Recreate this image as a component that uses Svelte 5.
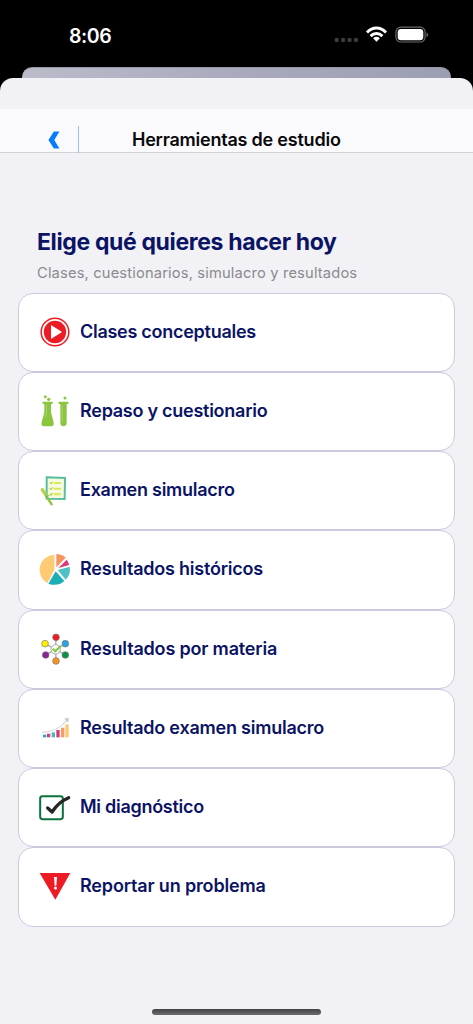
<script>
  const options = [
    { icon: 'play', label: 'Clases conceptuales', view: '0 -6 132 132', spacing: -0.27 },
    { icon: 'tubes', label: 'Repaso y cuestionario', view: '0 -2 132 132', spacing: -0.26 },
    { icon: 'exam', label: 'Examen simulacro', view: '0 2 132 132', spacing: -0.26 },
    { icon: 'pie', label: 'Resultados históricos', view: '0 0 132 132', spacing: -0.22 },
    { icon: 'network', label: 'Resultados por materia', view: '0 0 132 132', spacing: -0.18 },
    { icon: 'bars', label: 'Resultado examen simulacro', view: '0 1 132 132', spacing: -0.22 },
    { icon: 'check', label: 'Mi diagnóstico', view: '0 2 132 132', spacing: -0.28 },
    { icon: 'alert', label: 'Reportar un problema', view: '0 240 132 132', spacing: -0.16 }
  ];

  const nodes = [
    { x: 66, y: 31, color: '#ed1c24' },
    { x: 94, y: 50, color: '#29a5df' },
    { x: 94, y: 84, color: '#0a9347' },
    { x: 66, y: 102, color: '#f7941e' },
    { x: 35, y: 84, color: '#8b2394' },
    { x: 33, y: 50, color: '#fff200' }
  ];

  const bars = [
    { x: 27, y: 87, color: '#1fb0b3' },
    { x: 39, y: 84, color: '#dc3f77' },
    { x: 53, y: 80, color: '#45bdc0' },
    { x: 67, y: 73, color: '#d93a75' },
    { x: 81, y: 66, color: '#f99a66' },
    { x: 94, y: 56, color: '#ffc974' }
  ];
</script>

<div class="screen">
  <header class="status">
    <span class="time">8:06</span>
    <svg class="indicators" viewBox="0 0 100 20" aria-hidden="true">
      <g fill="#3c3c3e">
        <circle cx="4.7" cy="14" r="2.2" />
        <circle cx="11.1" cy="14" r="2.2" />
        <circle cx="17.5" cy="14" r="2.2" />
        <circle cx="23.9" cy="14" r="2.2" />
      </g>
      <g fill="none" stroke="#fff" stroke-width="2.9">
        <path d="M35 6.4C40.5.6 48.5.6 54 6.4" />
        <path d="M38.6 10.1C42 6.7 47 6.7 50.4 10.1" />
      </g>
      <path d="M41.1 12.3Q44.500 9.4 47.900 12.3L44.500 15.7Z" fill="#fff" />
      <rect x="63.900" y="1.2" width="29.200" height="14.8" rx="4.8" fill="none" stroke="#6b6b6d" stroke-width="1.2" />
      <rect x="65.700" y="3" width="25.600" height="11.2" rx="3.3" fill="#fff" />
      <path d="M94.500 6.3Q96.200 7.3 96.200 8.8T94.500 11.3Z" fill="#6b6b6d" />
    </svg>
  </header>

  <div class="behind"></div>

  <main class="sheet">
    <nav class="navbar">
      <button class="back" aria-label="Atrás">
        <svg viewBox="0 0 12 18"><path d="M5.9.4H11.4L6.3 9L11.4 17.6H5.9L.4 9Z" fill="#087cff" /></svg>
      </button>
      <span class="divider"></span>
      <h1>Herramientas de estudio</h1>
    </nav>

    <section class="intro">
      <h2>Elige qué quieres hacer hoy</h2>
      <p>Clases, cuestionarios, simulacro y resultados</p>
    </section>

    <div class="options">
      {#each options as option}
        <button class="option">
          <svg class="icon" viewBox={option.view} aria-hidden="true">
            {#if option.icon === 'play'}
              <circle cx="63" cy="60" r="41.5" fill="#fff" stroke="#ed1c24" stroke-width="4.5" />
              <circle cx="63" cy="60" r="33.5" fill="#ed1c24" />
              <path d="M51 39V81L84 60Z" fill="#fff" />
            {:else if option.icon === 'tubes'}
              <g fill="#8bc53f">
                <rect x="26" y="36" width="30" height="7" rx="2" />
                <path d="M31 42H51V68L59 98Q61 110 51 110H30Q20 110 23 98L31 68Z" />
                <rect x="74" y="36" width="29" height="7" rx="2" />
                <path d="M79 42H98V98Q98 110 88.5 110T79 98Z" />
                <circle cx="34" cy="21" r="4.5" />
                <circle cx="44" cy="29" r="5" />
                <circle cx="93" cy="25" r="4.5" />
              </g>
              <path d="M36 45V67L32 81H36L39 66V45ZM83 45V97H86V45Z" fill="#a9d46a" />
            {:else if option.icon === 'exam'}
              <path d="M38 27L93 29L92 92L38 91Z" fill="#f5fbdf" stroke="#5bbda0" stroke-width="6" />
              <g fill="none" stroke="#b9d83e" stroke-width="4">
                <path d="M47 43L51 46L56 40M47 60L51 63L56 57M47 77L51 80L56 74" />
              </g>
              <g fill="none" stroke="#dce65c" stroke-width="6">
                <path d="M60 44H81M60 61H81M60 78H81" />
              </g>
              <path d="M25 65L53 108" stroke="#8dc63f" stroke-width="7" stroke-linecap="round" />
              <path d="M25 64L33 76" stroke="#b6d34a" stroke-width="10" stroke-linecap="round" />
              <path d="M35 87L46 81" stroke="#67b765" stroke-width="3" />
            {:else if option.icon === 'pie'}
              <path d="M61 66V20A46 46 0 0 0 40 106Z" fill="#ffca73" />
              <path d="M67 58V18Q83 18 95 29Z" fill="#f8935f" />
              <path d="M73 60L98 35Q103 42 106 51Z" fill="#dc3c76" />
              <path d="M71 66L107 56Q111 80 95 95Z" fill="#4ec2c3" />
              <path d="M65 70L91 99Q70 117 43 107Z" fill="#1baeb5" />
            {:else if option.icon === 'network'}
              <g stroke="#aaa" stroke-width="4">
                {#each nodes as node}
                  <line x1="65" y1="67" x2={node.x} y2={node.y} />
                {/each}
              </g>
              <circle cx="65" cy="67" r="14" fill="#fff" stroke="#aaa" stroke-width="3" />
              {#each nodes as node}
                <circle cx={node.x} cy={node.y} r="10" fill={node.color} stroke="#777" stroke-width="2" />
              {/each}
              <path d="M56 65L64 73L80 57" fill="none" stroke="#82c93d" stroke-width="6.5" />
            {:else if option.icon === 'bars'}
              {#each bars as bar}
                <rect x={bar.x} y={bar.y} width="10" height={95 - bar.y} fill={bar.color} />
              {/each}
              <path d="M25 80Q72 78 99 43" fill="none" stroke="#d4d4d6" stroke-width="3.5" />
              <path d="M92 40L103 37L102 49Z" fill="#c8c8ca" stroke="#c8c8ca" stroke-width="2" />
            {:else if option.icon === 'check'}
              <rect x="18.5" y="32.5" width="68" height="69" rx="7" fill="#fff" stroke="#0b713e" stroke-width="6" />
              <path d="M41 68L54 80Q73 50 104 37" fill="none" stroke="#242524" stroke-width="10" stroke-linecap="round" stroke-linejoin="round" />
            {:else}
              <path d="M17 264H109L64 344Z" fill="#ed1c24" />
              <path d="M60 276H69L67 302H62Z" fill="#fff" />
              <circle cx="64.5" cy="309" r="4.5" fill="#fff" />
            {/if}
          </svg>
          <span class="label" style="letter-spacing: {option.spacing}px">{option.label}</span>
        </button>
      {/each}
    </div>

    <div class="home-indicator"></div>
  </main>
</div>

<style>
  :global(body) {
    margin: 0;
    background: #000;
  }

  .screen {
    display: flex;
    flex-direction: column;
    width: 473px;
    height: 1024px;
    overflow: hidden;
    background: #000;
    font-family: Inter, 'Liberation Sans', sans-serif;
  }

  .status {
    display: flex;
    justify-content: space-between;
    box-sizing: border-box;
    height: 66.5px;
    padding: 24px 41px 0 69px;
    color: #fff;
  }

  .time {
    font-size: 19.5px;
    line-height: 24px;
    font-weight: 600;
    letter-spacing: -0.45px;
  }

  .indicators {
    width: 100px;
    height: 20px;
    margin-top: 2px;
  }

  .behind {
    flex: none;
    height: 11px;
    margin: 0 22px;
    border-top: 1px solid #9698a5;
    box-sizing: border-box;
    border-radius: 10px 10px 0 0;
    background: linear-gradient(100deg, #babcca, #a9aabd 50%, #9c9eb4);
  }

  .sheet {
    display: flex;
    flex: 1;
    flex-direction: column;
    border-radius: 13px 13px 0 0;
    background: #f2f1f6;
  }

  .navbar {
    display: flex;
    align-items: flex-start;
    box-sizing: border-box;
    height: 44px;
    margin-top: 31.5px;
    padding: 17px 0 0 48px;
    border-bottom: 1px solid #d2d2d6;
    background: #fafafc;
  }

  button {
    margin: 0;
    padding: 0;
    border: 0;
    background: none;
    font: inherit;
  }

  .back {
    width: 12px;
    height: 18px;
    margin-top: 4.5px;
  }

  .back svg {
    display: block;
    width: 12px;
    height: 18px;
  }

  .divider {
    width: 1.3px;
    height: 27px;
    margin-left: 18px;
    background: #8fc4fb;
  }

  h1 {
    margin: 2px 0 0 52.7px;
    color: #09090b;
    font-size: 18px;
    line-height: 24px;
    font-weight: 600;
    letter-spacing: -0.22px;
    white-space: nowrap;
  }

  .intro {
    height: 139.5px;
    padding: 74px 37px 0;
    box-sizing: border-box;
    white-space: nowrap;
  }

  h2 {
    margin: 0;
    color: #0b1464;
    font-size: 23px;
    line-height: 30px;
    font-weight: 700;
    letter-spacing: -0.36px;
  }

  p {
    margin: 6px 0 0;
    color: #8a8a8e;
    font-size: 14.7px;
    line-height: 20px;
    letter-spacing: 0.16px;
  }

  .options {
    display: flex;
    flex-direction: column;
    margin: 0 18px;
  }

  .option {
    display: flex;
    align-items: center;
    box-sizing: border-box;
    height: 79.25px;
    padding-left: 15px;
    border: 1.3px solid #c9cade;
    border-radius: 15px;
    background: #fff;
    color: #0b1464;
    font-size: 18px;
    font-weight: 600;
    text-align: left;
    white-space: nowrap;
  }

  .icon {
    width: 44px;
    height: 44px;
    margin-right: 2px;
  }

  .label {
    line-height: 22px;
    padding-bottom: 1px;
  }

  .home-indicator {
    width: 169px;
    height: 6px;
    margin: auto auto 9px;
    border-radius: 3px;
    background: linear-gradient(#424244, #6c6c6e);
  }
</style>
